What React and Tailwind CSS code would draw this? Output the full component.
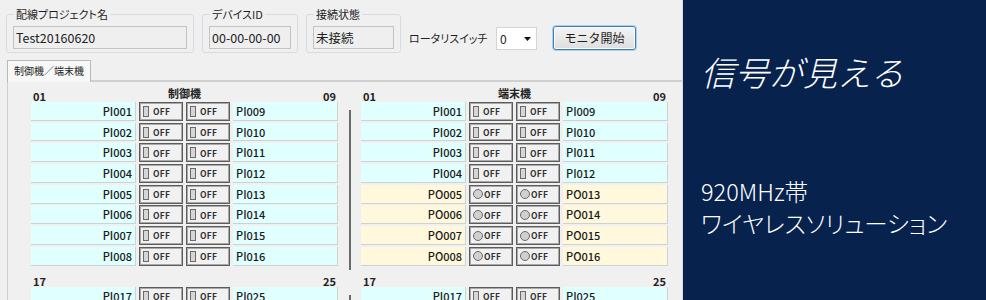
import React from 'react';

const pad = (n) => String(n).padStart(3, '0');

// 1セクション分の行データを作る
const makeRows = (start, kind) =>
    Array.from({ length: 8 }, (_, i) => {
        const a = start + i;
        const b = start + i + 8;
        const type = typeof kind === 'function' ? kind(i) : kind;
        return { left: `${type}${pad(a)}`, right: `${type}${pad(b)}`, type };
    });

const sections = [
    {
        from: '01', to: '09',
        left: { title: '制御機', rows: makeRows(1, 'PI') },
        right: { title: '端末機', rows: makeRows(1, (i) => (i < 4 ? 'PI' : 'PO')) },
    },
    {
        from: '17', to: '25',
        left: { title: '', rows: makeRows(17, 'PI') },
        right: { title: '', rows: makeRows(17, 'PI') },
    },
];

const GroupBox = ({ label, value, width }) => (
    <fieldset className={`rounded-[3px] border border-[#d6dce2] px-[6px] pb-[3px] ${width}`}>
        <legend className="ml-[1px] px-[2px] text-[11px] leading-[16px] text-[#1e1e1e] [font-feature-settings:'palt']">{label}</legend>
        <div className="mt-[4px] h-[23px] border border-[#c3c3c3] bg-[#efefef] px-[2px] text-[12.5px] leading-[21px] text-[#222]">
            {value}
        </div>
    </fieldset>
);

const Toggle = ({ round }) => (
    <div
        className={`flex h-full w-[44px] items-center border border-[#5c5c5c] bg-[#f1f1f1] pl-[3px] shadow-[inset_0_0_0_1px_#a9a9a9] ${round ? 'gap-[1px]' : 'gap-[4px]'}`}
    >
        {round ? (
            <span className="h-[10px] w-[10px] rounded-full border border-[#6a6a6a] bg-[#d0d0d0]" />
        ) : (
            <span className="h-[11px] w-[6px] border border-[#6a6a6a] bg-[#d6d6d6]" />
        )}
        <span className="text-[8.5px] font-bold leading-none tracking-[0.3px] text-[#333]">OFF</span>
    </div>
);

const Block = ({ from, to, title, rows }) => (
    <div className="flex w-[307px] flex-col">
        <div className="grid h-[14px] grid-cols-3 px-[2px] text-[11px] font-bold text-[#222]">
            <span className="self-end leading-[11px]">{from}</span>
            <span className="self-start text-center leading-[10px]">{title}</span>
            <span className="self-end text-right leading-[11px]">{to}</span>
        </div>
        <div className="flex flex-col gap-[1.9px]">
            {rows.map((r) => {
                const cell = r.type === 'PO' ? 'bg-[#fff8dd]' : 'bg-[#e0ffff]';
                return (
                    <div key={r.left} className="flex h-[18.8px] gap-[3px] text-[11px] font-medium text-[#1a1a1a]">
                        <div className={`w-[105px] border-b border-r border-[#cdd3d3] pr-[3px] text-right leading-[18px] ${cell}`}>
                            {r.left}
                        </div>
                        <Toggle round={r.type === 'PO'} />
                        <Toggle round={r.type === 'PO'} />
                        <div className={`w-[105px] border-b border-r border-[#cdd3d3] pl-[3px] leading-[18px] ${cell}`}>
                            {r.right}
                        </div>
                    </div>
                );
            })}
        </div>
    </div>
);

const App = () => {
    return (
        <div className="flex h-[300px] w-[986px] overflow-hidden font-['Noto_Sans_CJK_JP','Noto_Sans',sans-serif]">
            {/* 左: 画面キャプチャ */}
            <div className="flex w-[683px] flex-col border-r border-[#dcdcdc] bg-[#f0f0f0]">
                <div className="flex items-start gap-[8px] pl-[6px] pt-[6px]">
                    <GroupBox label="配線プロジェクト名" value="Test20160620" width="w-[188px]" />
                    <GroupBox label="デバイスID" value="00-00-00-00" width="w-[96px]" />
                    <GroupBox label="接続状態" value="未接続" width="w-[95px]" />
                    <div className="mt-[21px] flex items-center gap-[9px]">
                        <span className="w-[78px] whitespace-nowrap text-[11px] text-[#1e1e1e] [font-feature-settings:'palt']">ロータリスイッチ</span>
                        <div className="flex h-[23px] w-[41px] items-center justify-between border border-[#d4d4d4] bg-white pl-[3px] pr-[5px] text-[12px] text-[#222]">
                            <span>0</span>
                            <svg width="7" height="4" viewBox="0 0 7 4">
                                <polygon points="0,0 7,0 3.5,4" fill="#111" />
                            </svg>
                        </div>
                    </div>
                    <button className="ml-[8px] mt-[20px] h-[24px] w-[83px] rounded-[3px] border border-[#3c7fb1] bg-gradient-to-b from-[#f4f4f4] to-[#dedede] text-[12px] text-[#1e1e1e] shadow-[0_0_0_1px_#a8d0ef,inset_0_0_0_1px_#ffffff]">
                        モニタ開始
                    </button>
                </div>

                <div className="mt-[7px] flex pl-[7px]">
                    <div className="relative z-10 -mb-[2px] h-[22px] border-x border-t border-[#b8b8b8] bg-[#f8f8f8] px-[6px] text-[10px] leading-[20px] text-[#222]">
                        制御機／端末機
                    </div>
                </div>

                <div className="ml-[7px] flex flex-1 flex-col gap-[3px] border-l border-t-2 border-[#cfcfcf] pl-[23px] pt-[6px]">
                    {sections.map((s) => (
                        <div key={s.from} className="flex">
                            <Block from={s.from} to={s.to} {...s.left} />
                            <div className="flex w-[23px] justify-center">
                                <div className="mt-[22px] h-[160px] w-[2px] bg-[#6b6b6b]" />
                            </div>
                            <Block from={s.from} to={s.to} {...s.right} />
                        </div>
                    ))}
                </div>
            </div>

            {/* 右: キャッチコピー */}
            <div className="flex flex-1 flex-col bg-[#07224d] pl-[18px] text-white">
                <div className="mt-[55px] text-[34px] font-light italic leading-none">信号が見える</div>
                <div className="mt-[86px] text-[23.5px] font-light leading-[32px] [font-feature-settings:'palt']">
                    <div>920MHz帯</div>
                    <div>ワイヤレスソリューション</div>
                </div>
            </div>
        </div>
    );
};

export default App;
